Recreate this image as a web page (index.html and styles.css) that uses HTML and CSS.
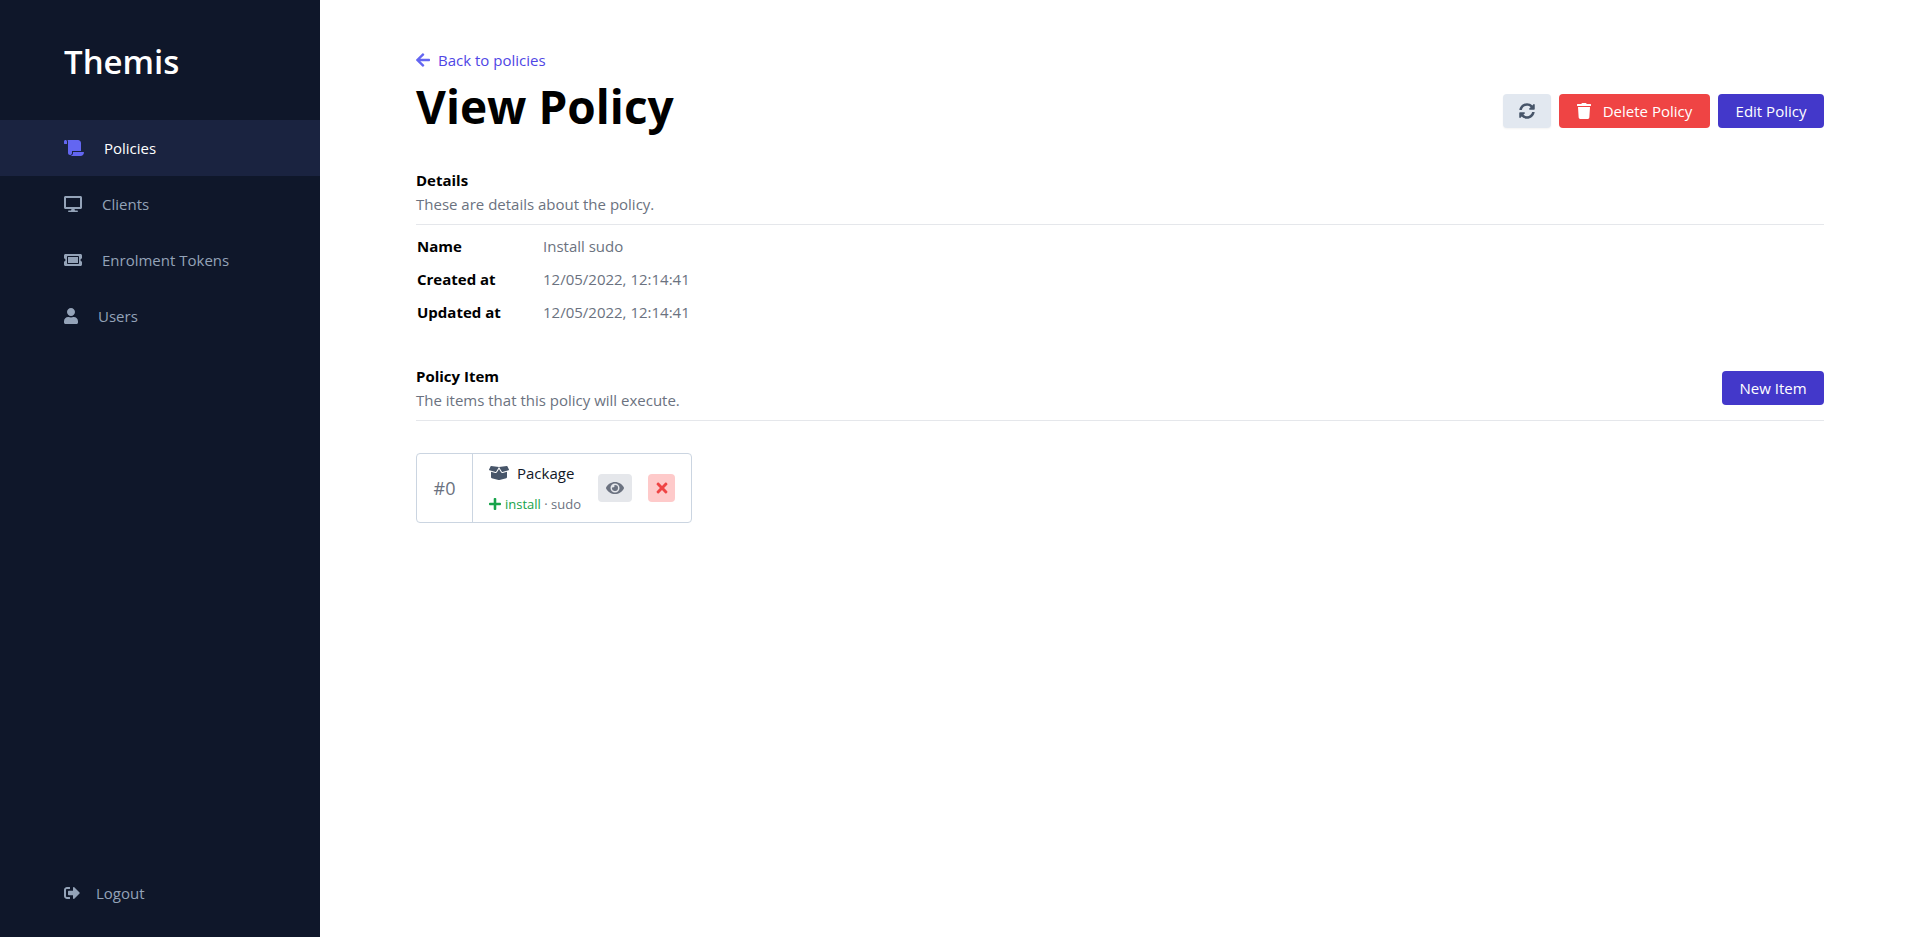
FILE: index.html
```html
<!DOCTYPE html>
<html lang="en">
<head>
<meta charset="utf-8">
<title>View Policy - Themis</title>
<link rel="stylesheet" href="styles.css">
</head>
<body>
<div class="app">
  <aside class="sidebar">
    <div class="brand">Themis</div>
    <nav class="nav">
      <a class="nav-item active"><svg class="icon nav-icon i-scroll" viewBox="0 0 640 512"><path d="M48 0C21.53 0 0 21.53 0 48v64c0 8.84 7.16 16 16 16h80V48C96 21.53 74.47 0 48 0zm208 412.57V352h288V96c0-52.94-43.06-96-96-96H111.59C121.74 13.41 128 29.92 128 48v368c0 38.87 34.65 69.65 74.75 63.12C234.22 474 256 444.46 256 412.57zM288 384v32c0 52.93-43.06 96-96 96h336c61.86 0 112-50.14 112-112 0-8.84-7.16-16-16-16H288z"/></svg><span>Policies</span></a>
      <a class="nav-item"><svg class="icon nav-icon i-wide" viewBox="0 0 576 512"><path d="M528 0H48C21.5 0 0 21.5 0 48v320c0 26.5 21.5 48 48 48h192l-16 48h-72c-13.3 0-24 10.7-24 24s10.7 24 24 24h272c13.3 0 24-10.7 24-24s-10.7-24-24-24h-72l-16-48h192c26.5 0 48-21.5 48-48V48c0-26.5-21.5-48-48-48zm-16 352H64V64h448v288z"/></svg><span>Clients</span></a>
      <a class="nav-item"><svg class="icon nav-icon i-wide" viewBox="0 0 576 512"><path d="M128 160h320v192H128V160zm400 96c0 26.51 21.49 48 48 48v96c0 26.51-21.49 48-48 48H48c-26.51 0-48-21.49-48-48v-96c26.51 0 48-21.49 48-48s-21.49-48-48-48v-96c0-26.51 21.49-48 48-48h480c26.51 0 48 21.49 48 48v96c-26.51 0-48 21.49-48 48zm-48-104c0-13.255-10.745-24-24-24H120c-13.255 0-24 10.745-24 24v208c0 13.255 10.745 24 24 24h336c13.255 0 24-10.745 24-24V152z"/></svg><span>Enrolment Tokens</span></a>
      <a class="nav-item"><svg class="icon nav-icon i-user" viewBox="0 0 448 512"><path d="M224 256c70.7 0 128-57.3 128-128S294.7 0 224 0 96 57.3 96 128s57.3 128 128 128zm89.6 32h-16.7c-22.2 10.2-46.9 16-72.9 16s-50.6-5.8-72.9-16h-16.7C60.2 288 0 348.2 0 422.4V464c0 26.5 21.5 48 48 48h352c26.5 0 48-21.5 48-48v-41.6c0-74.2-60.2-134.4-134.4-134.4z"/></svg><span>Users</span></a>
    </nav>
    <a class="logout"><svg class="icon logout-icon" viewBox="0 0 512 512"><path d="M497 273L329 441c-15 15-41 4.5-41-17v-96H152c-13.3 0-24-10.7-24-24v-96c0-13.3 10.7-24 24-24h136V88c0-21.4 25.9-32 41-17l168 168c9.3 9.4 9.3 24.6 0 34zM192 436v-40c0-6.6-5.4-12-12-12H96c-17.7 0-32-14.3-32-32V160c0-17.7 14.3-32 32-32h84c6.6 0 12-5.4 12-12V76c0-6.6-5.4-12-12-12H96c-53 0-96 43-96 96v192c0 53 43 96 96 96h84c6.6 0 12-5.4 12-12z"/></svg><span>Logout</span></a>
  </aside>
  <main class="main">
    <a class="back"><svg class="icon back-icon" viewBox="0 0 448 512"><path d="M257.5 445.1l-22.2 22.2c-9.4 9.4-24.6 9.4-33.9 0L7 273c-9.4-9.4-9.4-24.6 0-33.9L201.4 44.7c9.4-9.4 24.6-9.4 33.9 0l22.2 22.2c9.5 9.5 9.3 25-.4 34.3L136.6 216H424c13.3 0 24 10.7 24 24v32c0 13.3-10.7 24-24 24H136.6l120.5 114.8c9.8 9.3 10 24.8.4 34.3z"/></svg><span>Back to policies</span></a>
    <header class="page-head">
      <h1 class="title">View Policy</h1>
      <div class="actions">
        <button class="btn btn-grey"><svg class="icon sync-icon" viewBox="0 0 512 512"><path d="M370.72 133.28C339.458 104.008 298.888 87.962 255.848 88c-77.458.068-144.328 53.178-162.791 126.85-1.344 5.363-6.122 9.15-11.651 9.15H24.103c-7.498 0-13.194-6.807-11.807-14.176C33.933 94.924 134.813 8 256 8c66.448 0 126.791 26.136 171.315 68.685L463.03 40.97C478.149 25.851 504 36.559 504 57.941V192c0 13.255-10.745 24-24 24H345.941c-21.382 0-32.09-25.851-16.971-40.971l41.75-41.749zM32 296h134.059c21.382 0 32.09 25.851 16.971 40.971l-41.75 41.75c31.262 29.273 71.835 45.319 114.876 45.28 77.418-.07 144.315-53.144 162.787-126.849 1.344-5.363 6.122-9.15 11.651-9.15h57.304c7.498 0 13.194 6.807 11.807 14.176C478.067 417.076 377.187 504 256 504c-66.448 0-126.791-26.136-171.315-68.685L48.97 471.03C33.851 486.149 8 475.441 8 454.059V320c0-13.255 10.745-24 24-24z"/></svg></button>
        <button class="btn btn-red"><svg class="icon trash-icon" viewBox="0 0 448 512"><path d="M432 32H312l-9.4-18.7A24 24 0 0 0 281.1 0H166.8a23.72 23.72 0 0 0-21.4 13.3L136 32H16A16 16 0 0 0 0 48v32a16 16 0 0 0 16 16h416a16 16 0 0 0 16-16V48a16 16 0 0 0-16-16zM53.2 467a48 48 0 0 0 47.9 45h245.8a48 48 0 0 0 47.9-45L416 128H32z"/></svg><span>Delete Policy</span></button>
        <button class="btn btn-indigo">Edit Policy</button>
      </div>
    </header>

    <section class="details">
      <div class="section-head">
        <div>
          <h2 class="section-title">Details</h2>
          <p class="section-sub">These are details about the policy.</p>
        </div>
      </div>
      <dl class="facts">
        <dt>Name</dt><dd>Install sudo</dd>
        <dt>Created at</dt><dd>12/05/2022, 12:14:41</dd>
        <dt>Updated at</dt><dd>12/05/2022, 12:14:41</dd>
      </dl>
    </section>

    <section class="items">
      <div class="section-head">
        <div>
          <h2 class="section-title">Policy Item</h2>
          <p class="section-sub">The items that this policy will execute.</p>
        </div>
        <button class="btn btn-indigo btn-new">New Item</button>
      </div>
      <article class="card">
        <div class="card-index">#0</div>
        <div class="card-body">
          <div class="card-name"><svg class="icon box-icon" viewBox="0 0 640 512"><path d="M425.7 256c-16.9 0-32.8-9-41.4-23.4L320 126l-64.2 106.6c-8.7 14.5-24.6 23.5-41.5 23.5-4.5 0-9-.6-13.3-1.9L64 215v178c0 14.7 10 27.5 24.2 31l216.2 54.1c10.2 2.5 20.9 2.5 31 0L551.8 424c14.2-3.6 24.2-16.4 24.2-31V215l-137 39.1c-4.3 1.3-8.8 1.9-13.3 1.9zm212.6-112.2L586.8 41c-3.1-6.2-9.8-9.8-16.7-8.9L320 64l91.7 152.1c3.8 6.3 11.4 9.3 18.5 7.3l197.9-56.5c9.9-2.9 14.7-13.9 10.2-23.1zM53.2 41L1.7 143.8c-4.6 9.2.3 20.2 10.1 23l197.9 56.5c7.1 2 14.7-1 18.5-7.3L320 64 69.8 32.1c-6.9-.8-13.5 2.7-16.6 8.9z"/></svg><span>Package</span></div>
          <div class="card-meta"><svg class="icon plus-icon" viewBox="0 0 448 512"><path d="M416 208H272V64c0-17.67-14.33-32-32-32h-32c-17.67 0-32 14.33-32 32v144H32c-17.67 0-32 14.33-32 32v32c0 17.67 14.33 32 32 32h144v144c0 17.67 14.33 32 32 32h32c17.67 0 32-14.33 32-32V304h144c17.67 0 32-14.33 32-32v-32c0-17.67-14.33-32-32-32z"/></svg><span class="meta-state">install</span><span class="meta-rest"> · sudo</span></div>
        </div>
        <div class="card-actions">
          <button class="mini mini-view"><svg class="icon eye-icon" viewBox="0 0 576 512"><path d="M572.52 241.4C518.29 135.59 410.93 64 288 64S57.68 135.64 3.48 241.41a32.35 32.35 0 0 0 0 29.19C57.71 376.41 165.07 448 288 448s230.32-71.64 284.52-177.41a32.35 32.35 0 0 0 0-29.19zM288 400a144 144 0 1 1 144-144 143.93 143.93 0 0 1-144 144zm0-240a95.31 95.31 0 0 0-25.31 3.79 47.85 47.85 0 0 1-66.9 66.9A95.78 95.78 0 1 0 288 160z"/></svg></button>
          <button class="mini mini-del"><svg class="icon x-icon" viewBox="0 0 352 512"><path d="M242.72 256l100.07-100.07c12.28-12.28 12.28-32.19 0-44.48l-22.24-22.24c-12.28-12.28-32.19-12.28-44.48 0L176 189.28 75.93 89.21c-12.28-12.28-32.19-12.28-44.48 0L9.21 111.45c-12.28 12.28-12.28 32.19 0 44.48L109.28 256 9.21 356.07c-12.28 12.28-12.28 32.19 0 44.48l22.24 22.24c12.28 12.28 32.2 12.28 44.48 0L176 322.72l100.07 100.07c12.28 12.28 32.2 12.28 44.48 0l22.24-22.24c12.28-12.28 12.28-32.19 0-44.48L242.72 256z"/></svg></button>
        </div>
      </article>
    </section>
  </main>
</div>
</body>
</html>
```
FILE: styles.css
```css
* { box-sizing: border-box; }
html, body { margin: 0; height: 100%; }
body {
  font-family: "Open Sans", "Noto Sans", "Liberation Sans", sans-serif;
  font-size: 15px;
  color: #000;
  background: #fff;
}
h1, h2, p, dl, dd { margin: 0; }
.icon { fill: currentColor; display: block; flex: none; }

.app { display: flex; height: 937px; overflow: hidden; }

.sidebar {
  width: 320px;
  flex: none;
  background: #0f172a;
  display: flex;
  flex-direction: column;
  color: #94a3b8;
}
.brand {
  padding: 38px 64px 0;
  height: 120px;
  font-size: 33px;
  line-height: 48px;
  font-weight: 600;
  color: #fff;
}
.nav { display: flex; flex-direction: column; }
.nav-item {
  height: 56px;
  padding-left: 64px;
  display: flex;
  align-items: center;
}
.nav-item.active { background: #1a2340; color: #fff; }
.nav-icon { height: 16px; margin-right: 20px; }
.i-scroll { width: 20px; color: #6366f1; }
.i-wide { width: 18px; }
.i-user { width: 14px; }
.logout {
  margin-top: auto;
  height: 56px;
  margin-bottom: 16px;
  padding-left: 64px;
  display: flex;
  align-items: center;
}
.logout-icon { width: 16px; height: 16px; margin-right: 16px; }

.main { flex: 1; padding: 50px 96px 0; min-width: 0; }
.back {
  display: flex;
  align-items: center;
  height: 20px;
  color: #4f46e5;
}
.back-icon { width: 14px; height: 16px; margin-right: 8px; color: #6366f1; }
.page-head { display: flex; align-items: center; justify-content: space-between; height: 56px; margin-top: 8px; }
.title { font-size: 46px; line-height: 56px; font-weight: 700; }
.actions { display: flex; gap: 8px; margin-top: 10px; }
.btn {
  height: 34px;
  border: 0;
  border-radius: 4px;
  font: inherit;
  color: #fff;
  display: flex;
  align-items: center;
  justify-content: center;
  padding: 0;
}
.btn-grey { width: 48px; background: #e2e8f0; color: #475569; box-shadow: 0 1px 2px rgba(0,0,0,.05); }
.sync-icon { width: 16px; height: 16px; }
.btn-red { width: 151px; background: #ef4444; }
.trash-icon { width: 14px; height: 16px; margin-right: 12px; }
.btn-indigo { width: 106px; background: #4338ca; }

.details { margin-top: 36px; }
.section-head {
  display: flex;
  justify-content: space-between;
  align-items: flex-end;
  padding-bottom: 10px;
  border-bottom: 1px solid #e5e7eb;
}
.section-title { font-size: 15px; line-height: 20px; font-weight: 700; }
.section-sub { font-size: 15px; line-height: 20px; margin-top: 4px; color: #6b7280; }
.facts {
  display: grid;
  grid-template-columns: 126px 1fr;
  grid-auto-rows: 33px;
  padding: 4px 0 0 1px;
  align-items: center;
}
.facts dt { font-weight: 700; color: #000; }
.facts dd { color: #6b7280; }

.items { margin-top: 38px; }
.btn-new { width: 102px; margin-bottom: 5px; }
.card {
  margin-top: 32px;
  width: 276px;
  height: 70px;
  border: 1px solid #cbd5e1;
  border-radius: 4px;
  display: flex;
  align-items: stretch;
}
.card-index {
  width: 56px;
  flex: none;
  border-right: 1px solid #cbd5e1;
  display: flex;
  align-items: center;
  justify-content: center;
  font-size: 18px;
  color: #6b7280;
}
.card-body { padding: 8px 0 0 16px; width: 125px; flex: none; }
.card-name { display: flex; align-items: center; height: 22px; color: #111827; }
.box-icon { width: 20px; height: 16px; margin-right: 8px; color: #475569; }
.card-meta { display: flex; align-items: center; margin-top: 11px; height: 18px; font-size: 13px; color: #6b7280; }
.plus-icon { width: 12px; height: 14px; color: #16a34a; margin-right: 4px; }
.meta-state { color: #16a34a; }
.meta-rest { white-space: pre; }
.card-actions { display: flex; align-items: center; gap: 16px; }
.mini { height: 28px; border: 0; padding: 0; border-radius: 4px; display: flex; align-items: center; justify-content: center; }
.mini-view { width: 34px; background: #e5e7eb; color: #6b7280; }
.eye-icon { width: 18px; height: 16px; }
.mini-del { width: 27px; background: #fecaca; color: #ef4444; }
.x-icon { width: 14px; height: 16px; }
```
